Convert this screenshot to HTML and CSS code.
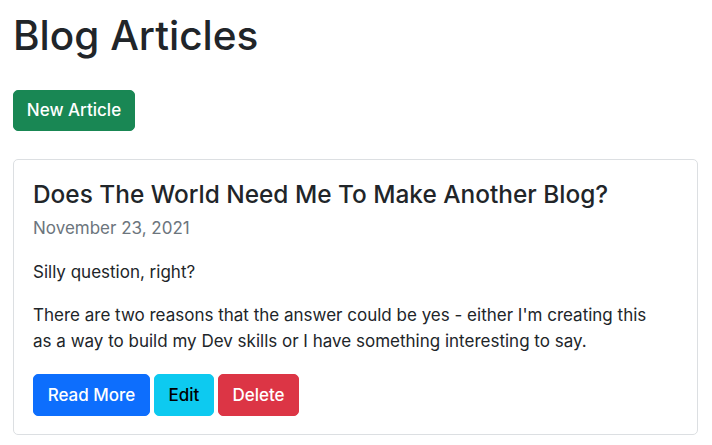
FILE: index.html
```html
<!DOCTYPE html>
<html>
<head>
<meta charset="utf-8">
<link rel="stylesheet" href="styles.css">
</head>
<body>
<main class="page">
  <h1 class="page-title">Blog Articles</h1>
  <div class="toolbar">
    <a class="btn btn-success" href="#">New Article</a>
  </div>
  <article class="card">
    <h2 class="card-title">Does The World Need Me To Make Another Blog?</h2>
    <div class="card-date">November 23, 2021</div>
    <p class="card-text">Silly question, right?</p>
    <p class="card-text card-summary">There are two reasons that the answer could be yes - either I'm creating this as a way to build my Dev skills or I have something interesting to say.</p>
    <div class="actions">
      <a class="btn btn-primary" href="#">Read More</a>
      <a class="btn btn-info" href="#">Edit</a>
      <button class="btn btn-danger" type="button">Delete</button>
    </div>
  </article>
</main>
</body>
</html>
```
FILE: styles.css
```css
html, body {
  margin: 0;
  padding: 0;
  background: #fff;
}
body {
  font-family: Inter, "Liberation Sans", Arial, sans-serif;
  font-size: 17px;
  line-height: 1.5;
  color: #212529;
}
.page {
  padding: 12px 14px 0 13px;
}
.page-title {
  margin: 0;
  font-size: 40.5px;
  font-weight: 500;
  line-height: 48px;
}
.toolbar {
  margin-top: 30px;
  display: flex;
}
.btn {
  display: inline-flex;
  align-items: center;
  justify-content: center;
  box-sizing: border-box;
  height: 42px;
  padding: 0;
  border: 1px solid transparent;
  border-radius: 5px;
  font-family: inherit;
  font-size: 17px;
  font-weight: 500;
  line-height: 1.5;
  text-decoration: none;
  color: #fff;
  cursor: pointer;
}
.btn-success { background: #198754; border-color: #198754; height: 41px; width: 122px; }
.btn-primary { background: #0d6efd; border-color: #0d6efd; width: 117px; }
.btn-info { background: #0dcaf0; border-color: #0dcaf0; color: #000; width: 60px; }
.btn-danger { background: #dc3545; border-color: #dc3545; width: 81px; }
.card {
  margin-top: 28px;
  border: 1px solid #dcdfe2;
  border-radius: 5px;
  padding: 20px 19px 18px 19px;
}
.card-title {
  margin: 0;
  font-size: 24.4px;
  font-weight: 500;
  line-height: 1.2;
}
.card-date {
  margin-top: 7px;
  color: #6c757d;
}
.card-text {
  margin: 18px 0 0;
}
.card-summary {
  max-width: 625px;
}
.actions {
  margin-top: 20px;
  display: flex;
  gap: 4px;
}
```
